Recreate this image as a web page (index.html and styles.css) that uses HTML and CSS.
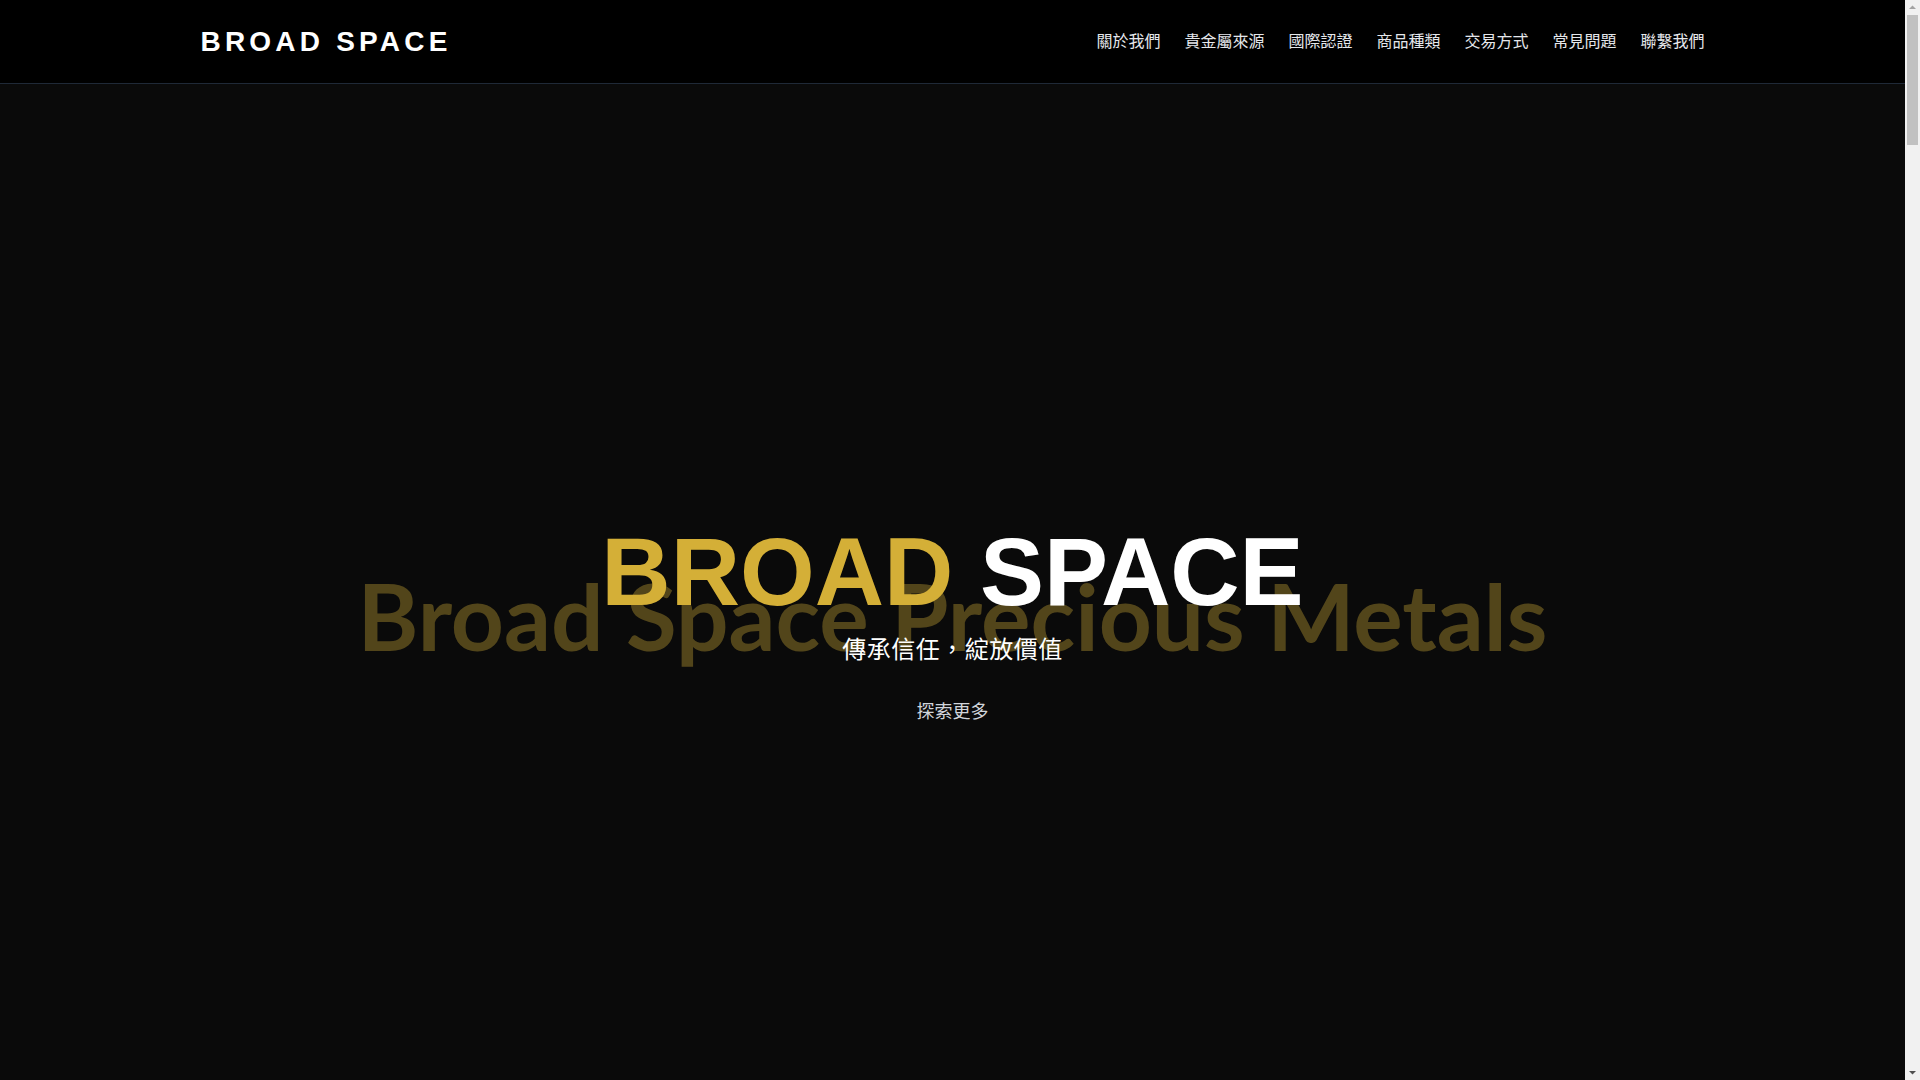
FILE: index.html
```html
<!DOCTYPE html>
<html lang="zh-Hant">
<head>
<meta charset="utf-8">
<title>BROAD SPACE</title>
<link rel="stylesheet" href="styles.css">
</head>
<body>
<header class="site-header">
  <div class="container header-inner">
    <a class="logo" href="#">BROAD SPACE</a>
    <nav class="main-nav">
      <a href="#about">關於我們</a>
      <a href="#source">貴金屬來源</a>
      <a href="#cert">國際認證</a>
      <a href="#products">商品種類</a>
      <a href="#trade">交易方式</a>
      <a href="#faq">常見問題</a>
      <a href="#contact">聯繫我們</a>
    </nav>
  </div>
</header>
<main>
  <section class="hero">
    <div class="hero-content">
      <div class="title-stack">
        <div class="bg-text">Broad Space Precious Metals</div>
        <h1 class="hero-title"><span class="gold">BROAD</span> SPACE</h1>
      </div>
      <p class="hero-sub">傳承信任，綻放價值</p>
      <a class="hero-btn" href="#about">探索更多</a>
    </div>
  </section>
  <section class="section" id="about"><div class="container"><h2>關於我們</h2><p>Broad Space 致力於提供值得信賴的貴金屬交易服務。</p></div></section>
  <section class="section" id="source"><div class="container"><h2>貴金屬來源</h2><p>所有貴金屬均來自國際認可的精煉廠。</p></div></section>
  <section class="section" id="cert"><div class="container"><h2>國際認證</h2><p>符合國際標準的品質與純度認證。</p></div></section>
  <section class="section" id="products"><div class="container"><h2>商品種類</h2><p>金條、金幣、銀條與銀幣。</p></div></section>
  <section class="section" id="trade"><div class="container"><h2>交易方式</h2><p>安全、透明、便捷的交易流程。</p></div></section>
  <section class="section" id="faq"><div class="container"><h2>常見問題</h2><p>解答您關於貴金屬投資的疑問。</p></div></section>
  <section class="section" id="contact"><div class="container"><h2>聯繫我們</h2><p>歡迎與我們聯繫。</p></div></section>
</main>
<div class="scrollbar" aria-hidden="true">
  <svg class="sb-arrow sb-up" width="15" height="15" viewBox="0 0 15 15"><path d="M4 9 L7.5 5.5 L11 9 Z" fill="#a3a3a3"/></svg>
  <div class="sb-track"><div class="sb-thumb"></div></div>
  <svg class="sb-arrow sb-down" width="15" height="15" viewBox="0 0 15 15"><path d="M4 6 L7.5 9.5 L11 6 Z" fill="#505050"/></svg>
</div>
</body>
</html>
```
FILE: styles.css
```css
* { box-sizing: border-box; }
html, body { margin: 0; padding: 0; }
body {
  margin-right: 15px;
  background: #0a0a0a;
  color: #ffffff;
  font-family: "Liberation Sans", "Noto Sans CJK TC", Arial, sans-serif;
}
a { text-decoration: none; color: inherit; }

.container {
  max-width: 1536px;
  margin: 0 auto;
  padding: 0 16px;
}

.site-header {
  background: #000000;
  border-bottom: 1px solid #1f2937;
}
.header-inner {
  height: 83px;
  display: flex;
  align-items: center;
  justify-content: space-between;
}
.logo {
  font-family: "Liberation Sans", Arial, sans-serif;
  font-weight: 700;
  font-size: 28px;
  letter-spacing: 0.15em;
  color: #ffffff;
}
.main-nav {
  display: flex;
  gap: 24px;
  padding-bottom: 3px;
}
.main-nav a {
  font-family: "Noto Sans CJK TC", "Noto Sans", sans-serif;
  font-size: 16px;
  line-height: 24px;
  color: #e5e7eb;
}

.hero {
  height: 1080px;
  display: flex;
  align-items: center;
  justify-content: center;
}
.hero-content {
  display: flex;
  flex-direction: column;
  align-items: center;
  text-align: center;
}
.title-stack {
  position: relative;
}
.bg-text {
  position: absolute;
  top: 46px;
  left: 50%;
  transform: translateX(-50%);
  white-space: nowrap;
  font-family: Lato, "Liberation Sans", sans-serif;
  font-weight: 700;
  font-size: 92.6px;
  line-height: 1;
  color: rgba(212, 175, 55, 0.36);
  pointer-events: none;
}
.hero-title {
  position: relative;
  margin: 0;
  font-family: "Liberation Sans", Arial, sans-serif;
  font-weight: 700;
  font-size: 96px;
  line-height: 1;
  color: #ffffff;
}
.gold { color: #d4af37; }
.hero-sub {
  position: relative;
  margin: 12px 0 0;
  font-family: "Noto Sans CJK TC", sans-serif;
  font-size: 24px;
  line-height: 32px;
  letter-spacing: 0.5px;
  color: #ffffff;
}
.hero-btn {
  position: relative;
  margin-top: 32px;
  font-family: "Noto Sans CJK TC", sans-serif;
  font-size: 18px;
  line-height: 28px;
  color: #d1d5db;
}

.section {
  min-height: 1080px;
  padding: 96px 0;
  border-top: 1px solid #111;
}
.section h2 {
  margin: 0 0 24px;
  font-family: "Noto Sans CJK TC", sans-serif;
  font-size: 36px;
  color: #d4af37;
}
.section p {
  margin: 0;
  font-family: "Noto Sans CJK TC", sans-serif;
  font-size: 18px;
  color: #9ca3af;
}

/* emulated browser scrollbar */
.scrollbar {
  position: fixed;
  top: 0;
  right: 0;
  width: 15px;
  height: 100vh;
  background: #f1f1f1;
  display: flex;
  flex-direction: column;
  z-index: 10;
}
.sb-arrow {
  display: block;
  flex: none;
}
.sb-track {
  flex: 1;
  padding: 0 2px;
}
.sb-thumb {
  height: 130px;
  background: #c1c1c1;
}
```
